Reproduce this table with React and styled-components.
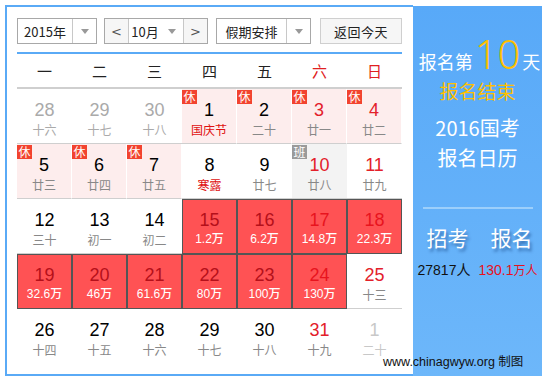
import React from "react";
import styled, { createGlobalStyle, css } from "styled-components";

const GlobalStyle = createGlobalStyle`
  html, body { margin: 0; padding: 0; background: #fff; }
  body { font-family: "Noto Sans CJK SC", "Noto Sans", sans-serif; }
  * { box-sizing: border-box; }
`;

const Page = styled.div`
  position: relative;
  width: 548px;
  height: 382px;
  display: flex;
  align-items: flex-start;
  padding: 5px 0 0 5px;
`;

const Frame = styled.div`
  width: 408px;
  height: 371px;
  border: 2px solid #5aaaf6;
  border-right: none;
  padding: 11px 0 0 10px;
`;

const Toolbar = styled.div`
  display: flex;
  height: 26px;
  width: 385px;
`;

const Select = styled.div`
  display: flex;
  width: ${(p) => p.$w}px;
  margin-right: ${(p) => p.$mr || 0}px;
  height: 26px;
  border: 1px solid #a8a8a8;
  background: #fff;
  font-size: 13px;
  color: #222;
`;

const SelectText = styled.div`
  flex: 1;
  display: flex;
  align-items: center;
  justify-content: center;
  line-height: 1;
`;

const Caret = styled.div`
  width: ${(p) => p.$w || 24}px;
  display: flex;
  align-items: center;
  justify-content: center;
  border-left: ${(p) => (p.$noDivider ? "none" : "1px solid #c8c8c8")};
  &::after {
    content: "";
    border-left: 4px solid transparent;
    border-right: 4px solid transparent;
    border-top: 5px solid #999;
  }
`;

const NavBtn = styled.div`
  width: 24px;
  display: flex;
  align-items: center;
  justify-content: center;
  font-family: "DejaVu Sans", sans-serif;
  font-size: 13px;
  color: #555;
  background: #f6f6f6;
  ${(p) => (p.$left ? "border-right: 1px solid #c8c8c8;" : "border-left: 1px solid #c8c8c8;")}
`;

const Button = styled.div`
  width: 82px;
  height: 26px;
  border: 1px solid #cfcfcf;
  background: #f6f6f6;
  font-size: 13px;
  color: #222;
  display: flex;
  align-items: center;
  justify-content: center;
  letter-spacing: 0.5px;
`;

const BlueRule = styled.div`
  width: 385px;
  height: 2px;
  background: #5aaaf6;
  margin-top: 8px;
`;

const WeekHeader = styled.div`
  display: grid;
  grid-template-columns: repeat(7, 55px);
  height: 35px;
  border-bottom: 2px solid #cfcfcf;
  width: 385px;
`;

const WeekDay = styled.div`
  display: flex;
  align-items: center;
  justify-content: center;
  font-size: 15px;
  color: ${(p) => (p.$red ? "#e02020" : "#222")};
`;

const Grid = styled.div`
  display: grid;
  grid-template-columns: repeat(7, 55px);
  grid-auto-rows: 55px;
  width: 385px;
`;

const Cell = styled.div`
  position: relative;
  display: flex;
  flex-direction: column;
  align-items: center;
  padding-top: 10px;
  border-bottom: ${(p) => (p.$last ? "none" : "1px solid #cfcfcf")};
  background: #fff;
  ${(p) =>
    p.$kind === "holiday" &&
    css`
      background: #fdeded;
      border-right: 1px solid #fff;
    `}
  ${(p) =>
    p.$kind === "work" &&
    css`
      background: #f3f3f3;
    `}
  ${(p) =>
    p.$kind === "hot" &&
    css`
      background: #ff5254;
      border: 1px solid #555;
      padding-top: 9px;
    `}
`;

const Num = styled.div`
  font-family: "Liberation Sans", Arial, sans-serif;
  font-size: 18px;
  line-height: 22px;
  color: ${(p) => p.$color};
`;

const Sub = styled.div`
  font-size: 12px;
  line-height: 17px;
  color: ${(p) => p.$color};
  font-weight: ${(p) => (p.$bold ? 500 : 400)};
  ${(p) => p.$bold && "font-family: 'Liberation Sans', 'Noto Sans CJK SC', sans-serif;"}
`;

const Badge = styled.div`
  position: absolute;
  top: 1px;
  left: 0;
  width: 15px;
  height: 14px;
  background: ${(p) => (p.$gray ? "#9a9a9a" : "#f2432f")};
  color: #fff;
  font-size: 12px;
  line-height: 14px;
  text-align: center;
`;

const Side = styled.div`
  width: 129px;
  height: 370px;
  margin-top: 1px;
  background: linear-gradient(#58a9f8, #6db7fa);
  display: flex;
  flex-direction: column;
  align-items: center;
  color: #fff;
  padding-top: 28px;
`;

const Headline = styled.div`
  display: flex;
  align-items: baseline;
  height: 40px;
  font-size: 18px;
  line-height: 1;
  white-space: nowrap;
  padding-left: 4px;
`;

const BigNum = styled.span`
  font-family: "Noto Sans", "Liberation Sans", sans-serif;
  font-weight: 300;
  font-size: 40px;
  color: #ffc000;
  margin: 0 2px;
  line-height: 1;
`;

const Yellow = styled.div`
  color: #ffc000;
  font-size: 19px;
  line-height: 24px;
  margin-top: 5px;
`;

const Title = styled.div`
  font-size: 20px;
  line-height: 30px;
  text-align: center;
  margin-top: 10px;
`;

const SideRule = styled.div`
  width: 110px;
  height: 2px;
  background: #9ccffb;
  margin-top: 34px;
`;

const StatRow = styled.div`
  display: flex;
  justify-content: space-between;
  width: 106px;
  font-size: 21px;
  line-height: 30px;
  margin-top: 13px;
  margin-left: 4px;
  text-shadow: 2px 3px 3px rgba(0, 40, 100, 0.45);
`;

const ValueRow = styled.div`
  display: flex;
  justify-content: space-between;
  align-items: baseline;
  width: 120px;
  line-height: 20px;
  margin-top: 8px;
  white-space: nowrap;
  font-family: "Liberation Sans", "Noto Sans CJK SC", sans-serif;
  font-size: 14px;
  color: #111;
`;

const RedVal = styled.span`
  color: #e8101c;
  font-size: 14px;
  & small {
    font-size: 12px;
    font-family: "Noto Sans CJK SC", sans-serif;
  }
`;

const Credit = styled.div`
  position: absolute;
  left: 383px;
  top: 351px;
  font-family: "Liberation Sans", "Noto Sans CJK SC", sans-serif;
  font-size: 12.5px;
  color: #111;
  white-space: nowrap;
`;

const weekdays = ["一", "二", "三", "四", "五", "六", "日"];

const days = [
  { n: 28, s: "十六", kind: "other" },
  { n: 29, s: "十七", kind: "other" },
  { n: 30, s: "十八", kind: "other" },
  { n: 1, s: "国庆节", kind: "holiday", badge: "休", fest: true },
  { n: 2, s: "二十", kind: "holiday", badge: "休" },
  { n: 3, s: "廿一", kind: "holiday", badge: "休", red: true },
  { n: 4, s: "廿二", kind: "holiday", badge: "休", red: true },
  { n: 5, s: "廿三", kind: "holiday", badge: "休" },
  { n: 6, s: "廿四", kind: "holiday", badge: "休" },
  { n: 7, s: "廿五", kind: "holiday", badge: "休" },
  { n: 8, s: "寒露", fest: true },
  { n: 9, s: "廿七" },
  { n: 10, s: "廿八", kind: "work", badge: "班", red: true },
  { n: 11, s: "廿九", red: true },
  { n: 12, s: "三十" },
  { n: 13, s: "初一" },
  { n: 14, s: "初二" },
  { n: 15, s: "1.2万", kind: "hot" },
  { n: 16, s: "6.2万", kind: "hot" },
  { n: 17, s: "14.8万", kind: "hot", red: true },
  { n: 18, s: "22.3万", kind: "hot", red: true },
  { n: 19, s: "32.6万", kind: "hot" },
  { n: 20, s: "46万", kind: "hot" },
  { n: 21, s: "61.6万", kind: "hot" },
  { n: 22, s: "80万", kind: "hot" },
  { n: 23, s: "100万", kind: "hot" },
  { n: 24, s: "130万", kind: "hot", red: true },
  { n: 25, s: "十三", red: true },
  { n: 26, s: "十四" },
  { n: 27, s: "十五" },
  { n: 28, s: "十六" },
  { n: 29, s: "十七" },
  { n: 30, s: "十八" },
  { n: 31, s: "十九", red: true },
  { n: 1, s: "二十", kind: "next" },
];

function numColor(d) {
  if (d.kind === "other") return "#aaaaaa";
  if (d.kind === "next") return "#c8c8c8";
  if (d.kind === "hot") return d.red ? "#e8141e" : "#b5101a";
  if (d.red) return "#e3202a";
  return "#000";
}

function subColor(d) {
  if (d.kind === "hot") return "#fff";
  if (d.kind === "other") return "#aaaaaa";
  if (d.kind === "next") return "#c8c8c8";
  if (d.fest) return "#e01010";
  return "#888";
}

export default function App() {
  return (
    <>
      <GlobalStyle />
      <Page>
        <Frame>
          <Toolbar>
            <Select $w={80} $mr={7}>
              <SelectText>2015年</SelectText>
              <Caret />
            </Select>
            <Select $w={104} $mr={8}>
              <NavBtn $left>&lt;</NavBtn>
              <SelectText>10月</SelectText>
              <Caret $w={22} $noDivider />
              <NavBtn>&gt;</NavBtn>
            </Select>
            <Select $w={95} $mr={9}>
              <SelectText>假期安排</SelectText>
              <Caret />
            </Select>
            <Button>返回今天</Button>
          </Toolbar>
          <BlueRule />
          <WeekHeader>
            {weekdays.map((w, i) => (
              <WeekDay key={w} $red={i >= 5}>
                {w}
              </WeekDay>
            ))}
          </WeekHeader>
          <Grid>
            {days.map((d, i) => (
              <Cell key={i} $kind={d.kind} $last={i >= 28}>
                {d.badge && <Badge $gray={d.badge === "班"}>{d.badge}</Badge>}
                <Num $color={numColor(d)}>{d.n}</Num>
                <Sub $color={subColor(d)} $bold={d.kind === "hot"}>
                  {d.s}
                </Sub>
              </Cell>
            ))}
          </Grid>
        </Frame>
        <Side>
          <Headline>
            报名第<BigNum>10</BigNum>天
          </Headline>
          <Yellow>报名结束</Yellow>
          <Title>
            2016国考
            <br />
            报名日历
          </Title>
          <SideRule />
          <StatRow>
            <span>招考</span>
            <span>报名</span>
          </StatRow>
          <ValueRow>
            <span>27817人</span>
            <RedVal>
              130.1<small>万人</small>
            </RedVal>
          </ValueRow>
        </Side>
        <Credit>www.chinagwyw.org 制图</Credit>
      </Page>
    </>
  );
}
